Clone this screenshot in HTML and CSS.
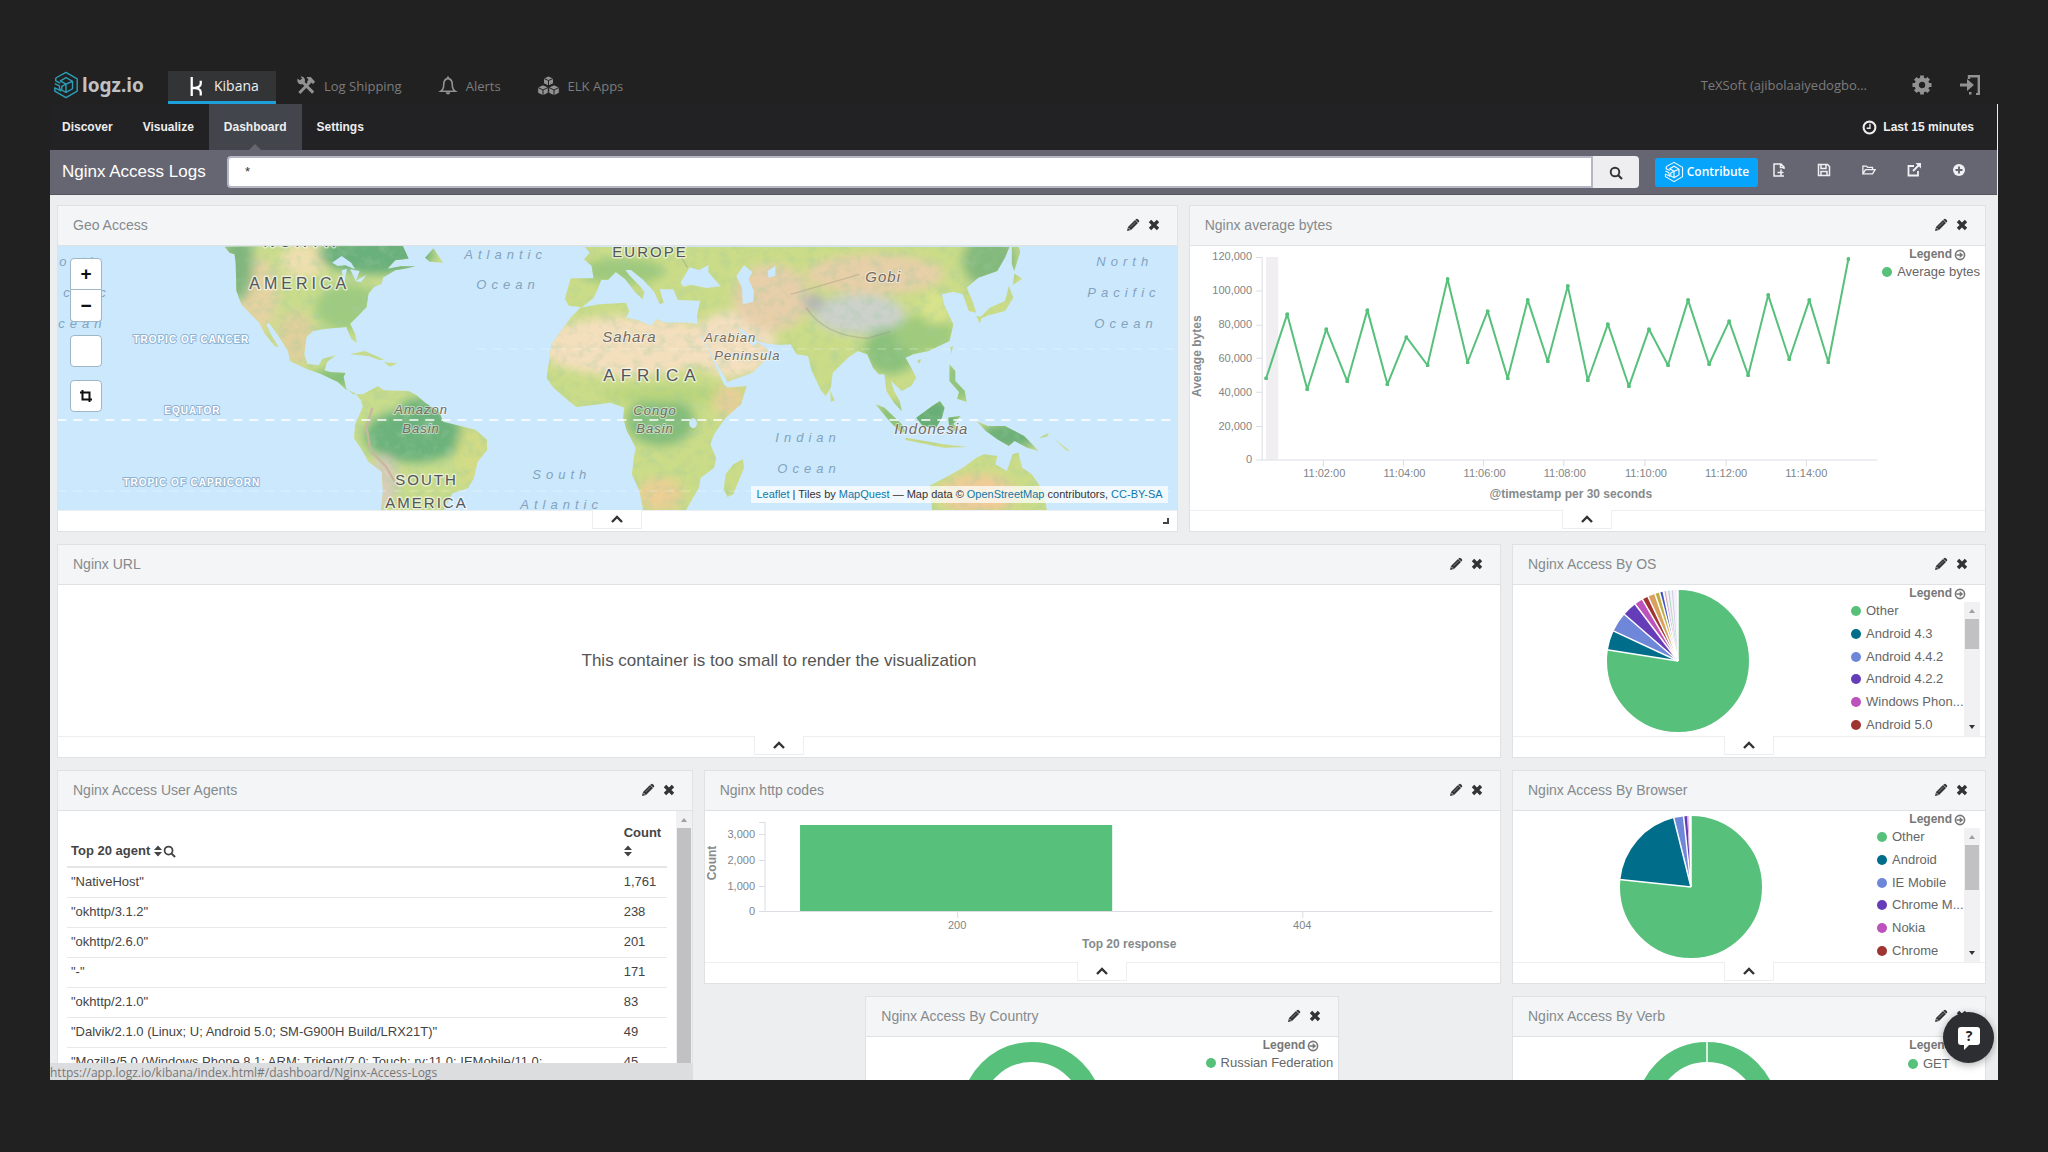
FILE: index.html
```html
<!DOCTYPE html>
<html lang="en">
<head>
<meta charset="utf-8">
<title>Nginx Access Logs - Kibana</title>
<link rel="stylesheet" href="styles.css">
</head>
<body>
<svg class="defs" aria-hidden="true">
  <symbol id="pencil" viewBox="0 0 14 14"><path d="M1 13l1-4 7-7 3 3-7 7z"/><path d="M10 1.200q1-.8 1.900 0l1 1q.8.9 0 1.800l-.6.6-3-2.900z"/><path d="M2.200 9.700l2 2" stroke="#fff" stroke-width=".8"/><path d="M4.500 9l5-5" stroke="#fff" stroke-width=".6" opacity=".6"/></symbol>
  <symbol id="times" viewBox="0 0 14 14"><path d="M3 3l8 8M11 3l-8 8" fill="none" stroke="currentColor" stroke-width="3.400"/></symbol>
  <symbol id="up" viewBox="0 0 14 14"><path d="M2 10l5-5 5 5" fill="none" stroke="currentColor" stroke-width="2.400"/></symbol>
  <symbol id="arrow" viewBox="0 0 12 12"><circle cx="6" cy="6" r="4.600" fill="none" stroke="currentColor" stroke-width="1.600"/><path d="M2.500 5.200h3.200V3L9.200 6 5.700 9V6.800H2.500z"/></symbol>
  <symbol id="search" viewBox="0 0 14 14"><circle cx="6" cy="6" r="4.300" fill="none" stroke="currentColor" stroke-width="1.900"/><path d="M9 9l4 4" stroke="currentColor" stroke-width="2.200"/></symbol>
  <symbol id="sort" viewBox="0 0 8 12"><path d="M0 5l4-4.500L8 5zM0 7h8l-4 4.500z"/></symbol>
  <symbol id="cube" viewBox="0 0 28 30"><g fill="none" stroke="currentColor" stroke-width="1.500" stroke-linejoin="round"><path d="M3 7.500L14 1.500l12 7v13l-12 7-12-7v-3.500l7 3.500"/><path d="M3 7.500v3l5 2.500M2 13.500l5 2.500v3l7 4 7-4v-8l-7-4-6 3.500 6 3.500 7-3M14 14v9"/><path d="M14 14l-4.500 2.500v3"/></g></symbol>
</svg>
<div class="screen">
  <header class="top">
    <a class="brand" href="#"><svg><use href="#cube"/></svg><span>logz.io</span></a>
    <nav class="products">
      <a class="on" href="#"><svg viewBox="0 0 14 20"><path d="M2.500 0v20M12 4v3q0 4.500-9 4.500 9 0 9 4.500v3.500" fill="none" stroke="#fff" stroke-width="2.400"/></svg>Kibana</a>
      <a href="#"><svg viewBox="0 0 20 20"><path d="M5 5l12.500 12.500" stroke="currentColor" stroke-width="3.200"/><path d="M1 2.500l2.500 2L6 2.500 4 .5q4.500-.5 5 4 0 2-1.500 3L5.500 9Q0 8.500 1 2.500z"/><path d="M14.500 6L3 18" stroke="currentColor" stroke-width="3"/><path d="M10.500 1l4.500 0 4.500 5-2 2.500-2.500-2-2 1.500-2-2 1.500-2z"/></svg>Log Shipping</a>
      <a href="#"><svg viewBox="0 0 20 20"><path d="M10 2.500Q5.500 3.500 5.500 9q0 5-3 7h15q-3-2-3-7 0-5.500-4.500-6.500z" fill="none" stroke="currentColor" stroke-width="1.700"/><path d="M9 .5h2V3H9zM7.500 17h5q-.5 2.500-2.500 2.500T7.500 17z"/></svg>Alerts</a>
      <a href="#"><svg class="cubes" viewBox="0 0 22 20"><g stroke="#212121" stroke-width="1"><path d="M11 0l5 2.200v5.300L11 10 6 7.500V2.200z"/><path d="M5.500 8.800l5.300 2.400v5.800l-5.300 2.700L.2 17v-5.800z"/><path d="M16.500 8.800l5.300 2.400v5.800l-5.300 2.700-5.300-2.700v-5.800z"/><path d="M6.500 2.500l4.500 2 4.500-2M11 4.500V10M.5 11.500l5 2.500 5-2.500M11.500 11.500l5 2.500 5-2.500M5.500 14v5.500M16.500 14v5.500" fill="none"/></g></svg>ELK Apps</a>
    </nav>
    <span class="account">TeXSoft (ajibolaaiyedogbo...</span>
    <button class="plain" aria-label="Account settings"><svg viewBox="0 0 20 20"><circle cx="10" cy="10" r="5.300" fill="none" stroke="currentColor" stroke-width="4.200"/><path d="M10 .5v3.500M10 16v3.500M.5 10H4M16 10h3.500M3.300 3.300l2.400 2.400M14.300 14.300l2.400 2.400M3.300 16.700l2.400-2.400M14.300 5.700l2.400-2.400" stroke="currentColor" stroke-width="3.800"/></svg></button>
    <button class="plain" aria-label="Sign out"><svg viewBox="0 0 20 20"><path d="M9 4V1.200h9.800v18H16" fill="none" stroke="currentColor" stroke-width="2.400"/><path d="M0 8.500h7V4l7 6-7 6v-4.500H0zM9 17h2.500v2.500H9z"/></svg></button>
  </header>
  <div class="app">
    <nav class="tabs">
      <a href="#">Discover</a><a href="#">Visualize</a><a class="on" href="#">Dashboard</a><a href="#">Settings</a>
      <button class="time"><svg viewBox="0 0 16 16"><circle cx="8" cy="8" r="6.300" fill="none" stroke="currentColor" stroke-width="2.200"/><path d="M8.500 4v4.800H5" fill="none" stroke="currentColor" stroke-width="1.400"/></svg>Last 15 minutes</button>
    </nav>
    <div class="bar">
      <h1>Nginx Access Logs</h1>
      <form class="query"><input type="text" value="*" aria-label="Search query"><button type="button" aria-label="Search"><svg><use href="#search"/></svg></button></form>
      <button class="contribute"><svg><use href="#cube"/></svg>Contribute</button>
      <div class="tools">
        <button class="plain" aria-label="New dashboard"><svg viewBox="0 0 14 14"><path d="M12 6V4L9 1H2v12h10M8.500 1v3.500H12M5.500 9.500h6M9 6.500v6" fill="none" stroke="currentColor" stroke-width="1.500"/></svg></button>
        <button class="plain" aria-label="Save dashboard"><svg viewBox="0 0 14 14"><path d="M1.500 1.500h9l2 2v9h-11zM4 1.500v4h5v-4M4 12.500V8.500h6v4" fill="none" stroke="currentColor" stroke-width="1.500"/></svg></button>
        <button class="plain" aria-label="Open dashboard"><svg viewBox="0 0 16 14"><path d="M1 11V2.500h4L6.500 4H12v2.500M1 11.500l3-5h11l-3 5z" fill="none" stroke="currentColor" stroke-width="1.500"/></svg></button>
        <button class="plain" aria-label="Share dashboard"><svg viewBox="0 0 14 14"><path d="M7 3H1.500v9.500H11V8M6 8l6-6" fill="none" stroke="currentColor" stroke-width="1.800"/><path d="M8.500 0H14v5.500z"/></svg></button>
        <button class="plain" aria-label="Add visualization"><svg viewBox="0 0 14 14"><circle cx="7" cy="7" r="6"/><path d="M7 3.500v7M3.500 7h7" stroke="#666672" stroke-width="1.900"/></svg></button>
      </div>
    </div>
    <main class="grid">
      <section class="panel geo">
        <header><h2>Geo Access</h2><button class="plain" aria-label="Edit"><svg><use href="#pencil"/></svg></button><button class="plain" aria-label="Remove"><svg><use href="#times"/></svg></button></header>
        <div class="body map">
          <svg class="world" viewBox="0 0 1120 264" preserveAspectRatio="xMidYMid slice">
            <defs>
              <filter id="soft" x="-30%" y="-30%" width="160%" height="160%"><feGaussianBlur stdDeviation="14"/></filter>
              <filter id="rough" x="0" y="0" width="100%" height="100%"><feTurbulence type="fractalNoise" baseFrequency=".035" numOctaves="3" seed="4"/><feColorMatrix values="0 0 0 0 .35  0 0 0 0 .6  0 0 0 0 .35  2.200 0 0 0 -1"/></filter>
              <clipPath id="west"><path d="M484 167l13 18 13 5 3 25 2 85 13 40 32 38 15 17 15 35 25 35 10 3-20-38-12-30 7-5 25 40 25 45 5 30 45 25 35 13 45 25 20 22 25 12 15 20 5 20-20 55-3 40 18 30 20 40 35 30 3 60-6 60h163l10-25 15-30 40-15 15-30 10-50 25-35v-30l-30-30-50-15-35-10-10-30-35-25-25-25-20-12-65-2-15-12-20 12-20 12-25 0-18-17-7-35 5-12-40-3-15-5 7-25 23-20-35 10-10 20-30-5-8-30 6-50 17-18 35-7 30-3 22-2 13 35 15 13-5-28-13-30 18-20 25-30 5-40 15-20 20-10 3-18 32-22 25-5 28-7-38 0-35 7 20-25 35-5-10-25-5-13zM1008 200l22-28 25 43-35-3zM812 490l38-10 50 25-10 3-30-13zM900 514l36 3-20 10z"/></clipPath>
              <clipPath id="east"><path d="M-75 380l25-30 50-10 70-5 8 25-8 20 30 8 35 17 15-20 20 10 60 0 28 5 10 40 22 50 20 50 15 40 10 10 50-5-15 55-40 40-30 50-10 30 15 40-5 30-35 30-5 30-20 40-15 30H115l-10-60-20-50 5-50 5-30-23-50-10-40 3-30-35-15-30 5-60 8-30-28-30-30-18-30 8-60 5-40 25-40zM375 805l3 25-28 80-15 8-10-23 5-45 20-30zM-75 262l60 0-5-37-20-20 15-20-13-18H1072l-12 33-20 40-50 20-30 30 15 40 10 35-20-5-15-50-25-8-30 8 5 30 25 60-10 50-55 30-40 10-20 10 15 30 13 30-13 25-25 15-28-30 8 30 15 30 5 30-20-25-20-35-5-50h-15l-15-20-15-40-25-10-25 20-40 45-5 45-13 25-12-15-25-60-10-45-30-5-15-30-30 2-40-7-30-10-25-30-13-5 18 30 20 25 15-10 25 20-5 30-35 40-65 27-30-60-32-70-15-25-3-40 8-48-58-2-12-32-35 0 10 40-10 5-15-38-30-37-30-28-15 0 10 16 30 35 10 15-5 22-20-22-25-38-25-22-20 23-18 0-10 30-10 25-30 28-35-5-10-20zM1078 167h18l4 15-16 58-6-20zM1085 248l20 15-25 20zM1070 285l12 35-22 40-40 12-30 13 30-35 40-20zM985 375l15 3-6 20zM917 470l7-5-4 23zM830 510l10-6-3 14zM915 520l15 20v30l25 30 5 33-25-10 5-20-25-33zM722 640l23 10 45 50 10 22-12 3-30-35zM800 740l100 20 62 8-62 2-100-23zM828 680l42-35 20-15 12 20-7 30-15 30-35-5zM912 680l33-6-20 25 16 18-26 5zM985 690l30 15 45 0 50 30 38 45-30-10-33-20-15 15-30-20-30-25zM1150 740l25-15-5 12zM1190 745l40 35-10-2zM603 598l12 30-10 5zM870 960l-8-75 58-35 30-20 35-30 20-10 35 5-5 25 30 20 15-50 15-5 10 45 25 20 30 50 10 60z"/></clipPath>
            </defs>
            <g transform="translate(-18 -55) scale(.3827 .3333)" clip-path="url(#west)">
              <path fill="#c9dc8c" d="M480 160h730v810H480z"/>
              <g filter="url(#soft)">
                <ellipse cx="570" cy="310" rx="55" ry="110" fill="#e5d3a2"/><ellipse cx="670" cy="440" rx="50" ry="80" fill="#dfd09c"/><ellipse cx="690" cy="210" rx="60" ry="50" fill="#eedfae"/>
                <ellipse cx="810" cy="350" rx="90" ry="70" fill="#9fcb80"/><ellipse cx="880" cy="190" rx="150" ry="60" fill="#6bb07c"/><ellipse cx="520" cy="220" rx="40" ry="110" fill="#80b67d"/><ellipse cx="800" cy="560" rx="90" ry="30" fill="#84c078"/>
                <ellipse cx="980" cy="735" rx="130" ry="80" fill="#6cb27b"/><ellipse cx="1000" cy="660" rx="60" ry="40" fill="#6cb27b"/><ellipse cx="1140" cy="790" rx="50" ry="100" fill="#d3dc85"/><ellipse cx="900" cy="870" rx="35" ry="80" fill="#d8cdba"/>
              </g>
              <path d="M870 650l-15 60 10 70 40 45 30 60" fill="none" stroke="#c9b5a0" stroke-width="6"/>
              <path filter="url(#rough)" opacity=".45" d="M480 160h730v810H480z"/>
              <g fill="#cce8fd"><path d="M765 215l25-20 25 20 10 20-25-12-20 2zM790 238l14-5-8 45zM812 235l25 5-10 30zM825 270l30-18-15 22z"/></g>
            </g>
            <g transform="translate(542 -55) scale(.3827 .3333)" clip-path="url(#east)">
              <path fill="#cbdc88" d="M-150 160h1400v810H-150z"/>
              <g filter="url(#soft)">
                <ellipse cx="80" cy="465" rx="240" ry="90" fill="#f4dfbd"/><ellipse cx="350" cy="460" rx="110" ry="100" fill="#f4dfc0"/><ellipse cx="450" cy="320" rx="100" ry="100" fill="#e7cfaa"/><ellipse cx="720" cy="250" rx="180" ry="60" fill="#e7cfa8"/>
                <ellipse cx="60" cy="240" rx="110" ry="40" fill="#9fc97c"/><ellipse cx="160" cy="690" rx="90" ry="75" fill="#84bd7b"/><ellipse cx="200" cy="610" rx="200" ry="25" fill="#b9d57d"/><ellipse cx="340" cy="630" rx="40" ry="50" fill="#e9cf98"/><ellipse cx="160" cy="910" rx="60" ry="50" fill="#ebcf94"/>
                <ellipse cx="680" cy="370" rx="120" ry="60" fill="#ccd1cb"/><ellipse cx="560" cy="335" rx="28" ry="28" fill="#b4b5b4"/><ellipse cx="760" cy="480" rx="70" ry="70" fill="#8bc17c"/><ellipse cx="850" cy="430" rx="80" ry="60" fill="#a0cb7b"/><ellipse cx="1020" cy="210" rx="70" ry="80" fill="#84b97d"/><ellipse cx="880" cy="350" rx="40" ry="50" fill="#d8e38c"/>
                <ellipse cx="870" cy="680" rx="70" ry="60" fill="#68ae76"/><ellipse cx="1070" cy="735" rx="80" ry="40" fill="#6db079"/><ellipse cx="990" cy="910" rx="100" ry="60" fill="#f0cb97"/><ellipse cx="940" cy="570" rx="40" ry="60" fill="#8ec37a"/><ellipse cx="760" cy="690" rx="40" ry="60" fill="#8ec37a"/>
              </g>
              <path d="M540 350q50 85 160 92l60-20M200 170l30 60M500 310l180-60" fill="none" stroke="#918f77" stroke-width="4" opacity=".35"/>
              <path filter="url(#rough)" opacity=".4" d="M-150 160h1400v810H-150z"/>
              <g fill="#cce8fd"><path d="M212 275l24-46 25 8 24-15 0 22 32 42-37 5-40-10-20 6zM358 255l20-32 22 20-10 22 14 35-2 32-27 8-2-50zM440 240l20-16v30l-18 6zM1060 200l10 0-40 60z"/><ellipse cx="245" cy="697" rx="10" ry="15"/></g>
            </g>
            <g stroke="#fff" stroke-dasharray="9 7" fill="none"><path d="M0 174h1120" stroke-width="2" opacity=".75"/><path d="M420 103h700M0 245h1120" opacity=".35"/></g>
            <g class="m-land"><text x="206" y="1" class="sp3">NORTH</text><text x="192" y="43" class="sp3">AMERICA</text><text x="338" y="239" class="sp2">SOUTH</text><text x="328" y="262" class="sp2">AMERICA</text><text x="555" y="11" class="sp2">EUROPE</text><text x="546" y="135" class="sp4">AFRICA</text></g>
            <g class="m-region"><text x="545" y="96" class="big">Sahara</text><text x="647" y="96">Arabian</text><text x="657" y="114">Peninsula</text><text x="808" y="36" class="big">Gobi</text><text x="837" y="188" class="big">Indonesia</text><text x="337" y="168">Amazon</text><text x="345" y="187">Basin</text><text x="576" y="169">Congo</text><text x="579" y="187">Basin</text></g>
            <g class="m-sea"><text x="407" y="13">Atlantic</text><text x="419" y="43">Ocean</text><text x="475" y="233">South</text><text x="463" y="263">Atlantic</text><text x="718" y="196">Indian</text><text x="720" y="227">Ocean</text><text x="1039" y="20">North</text><text x="1030" y="51">Pacific</text><text x="1037" y="82">Ocean</text><text x="2" y="20">orth</text><text x="6" y="51">cific</text><text x="1" y="82">cean</text></g>
            <g class="m-line"><text x="76" y="97">TROPIC OF CANCER</text><text x="107" y="168">EQUATOR</text><text x="66" y="240">TROPIC OF CAPRICORN</text></g>
          </svg>
          <div class="controls">
            <div class="zoomers"><button aria-label="Zoom in">+</button><button aria-label="Zoom out">−</button></div>
            <button aria-label="Draw filter"></button>
            <button aria-label="Fit bounds"><svg viewBox="0 0 12 12"><path d="M2.500 0v9.500H12M0 2.500h9.500V12" fill="none" stroke="#111" stroke-width="2"/></svg></button>
          </div>
          <p class="credit"><a href="#">Leaflet</a> | Tiles by <a href="#">MapQuest</a> — Map data © <a href="#">OpenStreetMap</a> contributors, <a href="#">CC-BY-SA</a></p>
        </div>
        <footer><button aria-label="Toggle details"><svg><use href="#up"/></svg></button><i class="grip"></i></footer>
      </section>

      <section class="panel avg">
        <header><h2>Nginx average bytes</h2><button class="plain" aria-label="Edit"><svg><use href="#pencil"/></svg></button><button class="plain" aria-label="Remove"><svg><use href="#times"/></svg></button></header>
        <div class="body">
          <svg class="chart" viewBox="0 0 690 264" preserveAspectRatio="xMinYMin slice">
            <defs><marker id="dot" viewBox="-2 -2 4 4" markerWidth="4" markerHeight="4" markerUnits="userSpaceOnUse"><circle r="2" fill="#57c17b"/></marker></defs>
            <path d="M76 11h12v202H76z" fill="#f0eef1"/>
            <path class="axis" d="M66 11.500h6v202h-6M66 45h6M66 79h6M66 112h6M66 146h6M66 180h6M72 213.500h614M133 214v6M213 214v6M293 214v6M373 214v6M454 214v6M535 214v6M615 214v6"/>
            <g class="tick end"><text x="62" y="14">120,000</text><text x="62" y="48">100,000</text><text x="62" y="82">80,000</text><text x="62" y="116">60,000</text><text x="62" y="150">40,000</text><text x="62" y="184">20,000</text><text x="62" y="217">0</text></g>
            <g class="tick mid"><text x="134" y="231">11:02:00</text><text x="214" y="231">11:04:00</text><text x="294" y="231">11:06:00</text><text x="374" y="231">11:08:00</text><text x="455" y="231">11:10:00</text><text x="535" y="231">11:12:00</text><text x="615" y="231">11:14:00</text></g>
            <g class="label mid"><text x="380" y="251">@timestamp per 30 seconds</text><text transform="translate(11 110) rotate(-90)">Average bytes</text></g>
            <polyline class="series" points="76,132 97,68 117,143 136,83 157,135 177,64 197,138 216,91 237,119 257,33 277,116 297,65 317,132 337,54 357,115 377,40 397,134 417,78 438,140 458,83 477,119 497,54 518,118 538,75 557,129 577,49 598,113 618,54 637,116 657,13"/>
          </svg>
          <div class="legend"><h3>Legend<svg><use href="#arrow"/></svg></h3><ul><li class="c1">Average bytes</li></ul></div>
        </div>
        <footer><button aria-label="Toggle details"><svg><use href="#up"/></svg></button></footer>
      </section>

      <section class="panel url">
        <header><h2>Nginx URL</h2><button class="plain" aria-label="Edit"><svg><use href="#pencil"/></svg></button><button class="plain" aria-label="Remove"><svg><use href="#times"/></svg></button></header>
        <div class="body"><p class="notice">This container is too small to render the visualization</p></div>
        <footer><button aria-label="Toggle details"><svg><use href="#up"/></svg></button></footer>
      </section>

      <section class="panel os">
        <header><h2>Nginx Access By OS</h2><button class="plain" aria-label="Edit"><svg><use href="#pencil"/></svg></button><button class="plain" aria-label="Remove"><svg><use href="#times"/></svg></button></header>
        <div class="body">
          <div class="round"><svg viewBox="-72 -72 144 144">
            <circle r="71" fill="#f4f1f8"/>
            <g class="slices" transform="rotate(-90)">
              <circle r="35.500" pathLength="360" stroke="#57c17b" stroke-dasharray="279 360"/>
              <circle r="35.500" pathLength="360" stroke="#006e8a" stroke-dasharray="16 360" transform="rotate(279)"/>
              <circle r="35.500" pathLength="360" stroke="#6f87d8" stroke-dasharray="16 360" transform="rotate(295)"/>
              <circle r="35.500" pathLength="360" stroke="#663db8" stroke-dasharray="12 360" transform="rotate(311)"/>
              <circle r="35.500" pathLength="360" stroke="#bc52bc" stroke-dasharray="7 360" transform="rotate(323)"/>
              <circle r="35.500" pathLength="360" stroke="#9e3533" stroke-dasharray="5 360" transform="rotate(330)"/>
              <circle r="35.500" pathLength="360" stroke="#daa05d" stroke-dasharray="6 360" transform="rotate(335)"/>
              <circle r="35.500" pathLength="360" stroke="#bfaf40" stroke-dasharray="4 360" transform="rotate(341)"/>
              <circle r="35.500" pathLength="360" stroke="#4050bf" stroke-dasharray="3 360" transform="rotate(345)"/>
              <circle r="35.500" pathLength="360" stroke="#d9a0c8" stroke-dasharray="1 360" transform="rotate(349)"/>
              <circle r="35.500" pathLength="360" stroke="#a8d8b8" stroke-dasharray="1 360" transform="rotate(352)"/>
              <circle r="35.500" pathLength="360" stroke="#d5cde8" stroke-dasharray="1 360" transform="rotate(355)"/>
            </g>
            <path class="cut" d="M0 0V-72"/><path class="cut" d="M0 0V-72" transform="rotate(279)"/><path class="cut" d="M0 0V-72" transform="rotate(295)"/><path class="cut" d="M0 0V-72" transform="rotate(311)"/><path class="cut" d="M0 0V-72" transform="rotate(323)"/><path class="cut" d="M0 0V-72" transform="rotate(330)"/><path class="cut" d="M0 0V-72" transform="rotate(335)"/><path class="cut" d="M0 0V-72" transform="rotate(341)"/><path class="cut" d="M0 0V-72" transform="rotate(345)"/><path class="cut" d="M0 0V-72" transform="rotate(348)"/>
          </svg></div>
          <div class="legend wide"><h3>Legend<svg><use href="#arrow"/></svg></h3>
            <div class="scroller"><ul><li class="c1">Other</li><li class="c2">Android 4.3</li><li class="c3">Android 4.4.2</li><li class="c4">Android 4.2.2</li><li class="c5">Windows Phon...</li><li class="c6">Android 5.0</li></ul><div class="track"><i class="thumb"></i></div></div></div>
        </div>
        <footer><button aria-label="Toggle details"><svg><use href="#up"/></svg></button></footer>
      </section>

      <section class="panel agents">
        <header><h2>Nginx Access User Agents</h2><button class="plain" aria-label="Edit"><svg><use href="#pencil"/></svg></button><button class="plain" aria-label="Remove"><svg><use href="#times"/></svg></button></header>
        <div class="body">
          <div class="sheet"><table>
            <thead><tr><th>Top 20 agent <svg class="sort"><use href="#sort"/></svg> <svg class="find"><use href="#search"/></svg></th><th class="num">Count<br><svg class="sort"><use href="#sort"/></svg></th></tr></thead>
            <tbody>
              <tr><td>"NativeHost"</td><td>1,761</td></tr>
              <tr><td>"okhttp/3.1.2"</td><td>238</td></tr>
              <tr><td>"okhttp/2.6.0"</td><td>201</td></tr>
              <tr><td>"-"</td><td>171</td></tr>
              <tr><td>"okhttp/2.1.0"</td><td>83</td></tr>
              <tr><td>"Dalvik/2.1.0 (Linux; U; Android 5.0; SM-G900H Build/LRX21T)"</td><td>49</td></tr>
              <tr><td>"Mozilla/5.0 (Windows Phone 8.1; ARM; Trident/7.0; Touch; rv:11.0; IEMobile/11.0;</td><td>45</td></tr>
            </tbody>
          </table></div>
          <div class="track tall"><i class="thumb"></i></div>
        </div>
      </section>

      <section class="panel codes">
        <header><h2>Nginx http codes</h2><button class="plain" aria-label="Edit"><svg><use href="#pencil"/></svg></button><button class="plain" aria-label="Remove"><svg><use href="#times"/></svg></button></header>
        <div class="body">
          <svg class="chart" viewBox="0 0 795 151" preserveAspectRatio="xMinYMin slice">
            <path class="axis" d="M54 11.500h6v89h-6M54 23.500h6M54 49.500h6M54 75.500h6M60 100.500h727M252.500 101v6M597.500 101v6"/>
            <path d="M95 14h312v86H95z" fill="#57c17b"/>
            <g class="tick end"><text x="50" y="27">3,000</text><text x="50" y="53">2,000</text><text x="50" y="79">1,000</text><text x="50" y="104">0</text></g>
            <g class="tick mid"><text x="252" y="118">200</text><text x="597" y="118">404</text></g>
            <g class="label mid"><text x="424" y="137">Top 20 response</text><text transform="translate(11 52) rotate(-90)">Count</text></g>
          </svg>
        </div>
        <footer><button aria-label="Toggle details"><svg><use href="#up"/></svg></button></footer>
      </section>

      <section class="panel browser">
        <header><h2>Nginx Access By Browser</h2><button class="plain" aria-label="Edit"><svg><use href="#pencil"/></svg></button><button class="plain" aria-label="Remove"><svg><use href="#times"/></svg></button></header>
        <div class="body">
          <div class="round"><svg viewBox="-72 -72 144 144">
            <circle r="71" fill="#faf8fc"/>
            <g class="slices" transform="rotate(-90)">
              <circle r="35.500" pathLength="360" stroke="#57c17b" stroke-dasharray="276 360"/>
              <circle r="35.500" pathLength="360" stroke="#006e8a" stroke-dasharray="70 360" transform="rotate(276)"/>
              <circle r="35.500" pathLength="360" stroke="#6f87d8" stroke-dasharray="8 360" transform="rotate(346)"/>
              <circle r="35.500" pathLength="360" stroke="#663db8" stroke-dasharray="3 360" transform="rotate(354)"/>
              <circle r="35.500" pathLength="360" stroke="#dcaed8" stroke-dasharray="1 360" transform="rotate(357)"/>
            </g>
            <path class="cut" d="M0 0V-72"/><path class="cut" d="M0 0V-72" transform="rotate(276)"/><path class="cut" d="M0 0V-72" transform="rotate(346)"/><path class="cut" d="M0 0V-72" transform="rotate(354)"/>
          </svg></div>
          <div class="legend narrow"><h3>Legend<svg><use href="#arrow"/></svg></h3>
            <div class="scroller"><ul><li class="c1">Other</li><li class="c2">Android</li><li class="c3">IE Mobile</li><li class="c4">Chrome M...</li><li class="c5">Nokia</li><li class="c6">Chrome</li></ul><div class="track"><i class="thumb big"></i></div></div></div>
        </div>
        <footer><button aria-label="Toggle details"><svg><use href="#up"/></svg></button></footer>
      </section>

      <section class="panel country">
        <header><h2>Nginx Access By Country</h2><button class="plain" aria-label="Edit"><svg><use href="#pencil"/></svg></button><button class="plain" aria-label="Remove"><svg><use href="#times"/></svg></button></header>
        <div class="body">
          <div class="round"><svg viewBox="-72 -72 144 144"><circle r="61" fill="none" stroke="#57c17b" stroke-width="20"/></svg></div>
          <div class="legend"><h3>Legend<svg><use href="#arrow"/></svg></h3><ul><li class="c1">Russian Federation</li></ul></div>
        </div>
      </section>

      <section class="panel verb">
        <header><h2>Nginx Access By Verb</h2><button class="plain" aria-label="Edit"><svg><use href="#pencil"/></svg></button><button class="plain" aria-label="Remove"><svg><use href="#times"/></svg></button></header>
        <div class="body">
          <div class="round"><svg viewBox="-72 -72 144 144"><circle r="61" fill="none" stroke="#57c17b" stroke-width="20"/><path class="cut" d="M0-50V-72"/></svg></div>
          <div class="legend slim"><h3>Legend<svg><use href="#arrow"/></svg></h3><ul><li class="c1">GET</li><li class="c2">POST</li></ul></div>
        </div>
      </section>
    </main>
    <div class="status">https://app.logz.io/kibana/index.html#/dashboard/Nginx-Access-Logs</div>
    <button class="help" aria-label="Help"><svg viewBox="0 0 24 24"><path d="M4 1h16q3 0 3 3v12q0 3-3 3h-8l-5 5v-5H4q-3 0-3-3V4q0-3 3-3z" fill="#fff"/><text x="12" y="15">?</text></svg></button>
  </div>
</div>
</body>
</html>
```
FILE: styles.css
```css
* { box-sizing: border-box; }
body { margin: 0; background: #212121; color: #444; font: 13px/18px "Liberation Sans", Arial, sans-serif; }
h1, h2, h3, p, ul { margin: 0; padding: 0; font-weight: normal; }
ul { list-style: none; }
a { text-decoration: none; color: inherit; }
svg { fill: currentColor; flex: none; }
button { font: inherit; padding: 0; border: 0; cursor: pointer; }
.plain { background: none; color: inherit; display: flex; align-items: center; justify-content: center; }
.defs { position: absolute; width: 0; height: 0; }

.screen { height: 100vh; padding: 71px 50px 72px; display: flex; flex-direction: column; }

/* product bar */
.top { display: flex; height: 33px; align-items: center; color: #7c7c7c; font: 13px/20px "Open Sans", sans-serif; padding: 0 18px 0 2px; }
.top > * { padding-bottom: 5px; }
.brand { display: flex; align-items: center; gap: 2px; width: 116px; color: #c0c2c4; font: bold 19px/24px "Noto Sans", sans-serif; }
.brand svg { width: 28px; height: 28px; color: #2b9fb9; }
.products { display: flex; align-self: stretch; flex: 1; padding-bottom: 0; }
.products a { display: flex; align-items: center; gap: 8px; padding: 0 18px 4px; }
.products svg { width: 20px; height: 19px; color: #929292; }
.products .cubes { width: 23px; height: 20px; }
.products .on { width: 108px; margin-right: 2px; background: #333436; border-bottom: 3px solid #1d9fdb; color: #eee; font-size: 14px; padding-bottom: 0; }
.account { margin-right: 45px; }
.top .plain { width: 20px; margin-left: 28px; }
.account + .plain { margin-left: 0; }
.top .plain svg { width: 20px; height: 20px; color: #929292; }

.app { position: relative; flex: 1; min-height: 0; display: flex; flex-direction: column; overflow: hidden; border-right: 1px solid #eee; background: #eceef0; }
.tabs { display: flex; height: 46px; flex: none; background: #222224; color: #eee; font-weight: bold; font-size: 12px; }
.tabs a { padding: 14px 15px; }
.tabs a:first-child { padding-left: 12px; }
.tabs .on { background: #42454b; position: relative; }
.tabs .on::after { content: ""; position: absolute; left: 50%; bottom: 0; margin-left: -6px; border: 6px solid transparent; border-top: 0; border-bottom-color: #666672; }
.time { margin-left: auto; padding-right: 23px; background: none; color: #eee; display: flex; align-items: center; gap: 6px; }
.time svg { width: 15px; height: 15px; }

/* query bar */
.bar { display: flex; align-items: center; height: 45px; flex: none; padding: 0 31px 0 12px; background: #666672; color: #fff; border-bottom: 1px solid #565662; }
.bar h1 { font-size: 17px; line-height: 24px; width: 165px; }
.query { display: flex; flex: 1; height: 32px; }
.query input { flex: 1; min-width: 0; border: 2px solid #b5b7c4; border-radius: 4px 0 0 4px; padding: 0 16px; font: 13px/18px "Liberation Sans", Arial, sans-serif; color: #333; background: #fff; }
.query button { width: 46px; background: #eeeef0; color: #333; border-radius: 0 4px 4px 0; }
.query svg { width: 14px; height: 14px; vertical-align: middle; }
.contribute { display: flex; align-items: center; justify-content: center; gap: 3px; width: 103px; height: 29px; margin: 0 14px 0 16px; background: #06a4fa; color: #fff; border-radius: 3px; font: 600 12px/18px "Open Sans", sans-serif; }
.contribute svg { width: 20px; height: 22px; }
.tools { display: flex; gap: 31px; color: #f0f0f4; padding-bottom: 4px; }
.tools svg { width: 14px; height: 14px; }

/* dashboard */
.grid { flex: 1; min-height: 0; display: grid; grid-template-columns: repeat(12, minmax(0, 1fr)); grid-auto-rows: 101px; gap: 12px 11px; padding: 10px 11px 0 7px; overflow: hidden; }
.panel { display: flex; flex-direction: column; min-width: 0; background: #fff; border: 1px solid #dfe1e3; }
.panel > header { display: flex; align-items: center; gap: 7px; height: 40px; flex: none; padding: 0 16px 2px 15px; background: #f4f5f7; border-bottom: 1px solid #dfe1e3; color: #333; }
.panel h2 { flex: 1; font-size: 14px; line-height: 18px; color: #858a8c; }
.panel header svg { width: 14px; height: 14px; }
.geo { grid-area: 1 / 1 / span 3 / span 7; }
.avg { grid-area: 1 / 8 / span 3 / span 5; }
.url { grid-area: 4 / 1 / span 2 / span 9; }
.os { grid-area: 4 / 10 / span 2 / span 3; }
.agents { grid-area: 6 / 1 / span 6 / span 4; }
.codes { grid-area: 6 / 5 / span 2 / span 5; }
.browser { grid-area: 6 / 10 / span 2 / span 3; }
.country { grid-area: 8 / 6 / span 2 / span 3; }
.verb { grid-area: 8 / 10 / span 2 / span 3; }
.body { flex: 1; min-height: 0; display: flex; position: relative; }
.panel > footer { height: 21px; flex: none; display: flex; justify-content: center; position: relative; border-top: 1px solid #edeef0; }
.panel > footer button { width: 50px; height: 19px; margin-top: -1px; background: #fff; border: 1px solid #edeef0; border-top: 0; color: #333; display: flex; align-items: center; justify-content: center; }
.panel > footer svg { width: 14px; height: 14px; }
.grip { position: absolute; right: 8px; bottom: 7px; width: 6px; height: 6px; border: solid #444; border-width: 0 2px 2px 0; }
.notice { margin: auto; font-size: 17px; line-height: 24px; color: #555; }

/* charts */
.chart { flex: 1; min-width: 0; height: 100%; }
.axis { fill: none; stroke: #dcdde3; }
.series { fill: none; stroke: #57c17b; stroke-width: 2; stroke-linejoin: round; marker: url(#dot); }
.tick { font-size: 11px; fill: #808688; }
.label { font-size: 12px; font-weight: bold; fill: #858a8c; }
.mid { text-anchor: middle; }
.end { text-anchor: end; }
.round { flex: 1; display: flex; justify-content: center; padding: 4px 7px 0 0; }
.round svg { width: 144px; height: 144px; }
.slices circle { fill: none; stroke-width: 71; }
.cut { stroke: #fff; stroke-width: 1.5; }

.legend { margin-right: 5px; display: flex; flex-direction: column; color: #666; }
.legend.wide { width: 130px; }
.legend.narrow { width: 104px; }
.legend.slim { width: 73px; }
.legend h3 { display: flex; justify-content: flex-end; align-items: center; gap: 2px; padding-right: 14px; font-size: 12px; line-height: 17px; font-weight: bold; color: #777; }
.legend h3 svg { width: 12px; height: 12px; }
.legend li { display: block; position: relative; padding-left: 16px; line-height: 18px; white-space: nowrap; }
.legend li::before { content: ""; position: absolute; left: 1px; top: 50%; margin-top: -5px; width: 10px; height: 10px; border-radius: 50%; background: var(--c); }
.c1 { --c: #57c17b; } .c2 { --c: #006e8a; } .c3 { --c: #6f87d8; } .c4 { --c: #663db8; } .c5 { --c: #bc52bc; } .c6 { --c: #9e3533; }
.legend.slim li { line-height: 23px; margin-top: -2px; }
.scroller { flex: 1; min-height: 0; display: flex; }
.scroller ul { flex: 1; min-width: 0; display: flex; flex-direction: column; justify-content: space-between; padding-bottom: 2px; }
.track { position: relative; width: 16px; flex: none; background: #f1f1f3; }
.track::before, .track::after { content: ""; position: absolute; left: 5px; border: 3px solid transparent; }
.track::before { top: 7px; border-top: 0; border-bottom: 4px solid #a0a0a0; }
.track::after { bottom: 7px; border-bottom: 0; border-top: 4px solid #333; }
.thumb { position: absolute; left: 1px; right: 1px; top: 17px; height: 30px; background: #c1c1c3; }
.thumb.big { height: 45px; }
.tall .thumb { height: auto; bottom: 0; }

/* agents table */
.sheet { flex: 1; min-width: 0; padding: 8px 9px 0; overflow: hidden; }
table { width: 100%; border-collapse: collapse; table-layout: fixed; }
th, td { text-align: left; vertical-align: bottom; padding: 5px 4px 6px; border-bottom: 1px solid #e6e8ea; white-space: nowrap; }
th { color: #444; padding-bottom: 6px; border-bottom: 2px solid #e3e5e7; }
.num { width: 47px; }
.sort { width: 8px; height: 12px; vertical-align: -2px; }
.find { width: 13px; height: 13px; vertical-align: -3px; margin-left: -2px; }

/* map */
.map { background: #cce8fd; overflow: hidden; }
.world { width: 100%; height: 100%; }
.world text { paint-order: stroke; stroke-linejoin: round; }
.m-land { font-size: 16px; fill: #54565a; stroke: #ffffff90; stroke-width: 3px; }
.m-region { font-size: 13px; font-style: italic; fill: #746b62; stroke: #ffffff80; stroke-width: 2px; letter-spacing: 1px; }
.m-region .big { font-size: 15px; }
.m-sea { font-size: 13px; font-style: italic; fill: #82a3bd; letter-spacing: 5px; }
.m-line { font-size: 10px; font-weight: bold; fill: #fff; stroke: #8fb2d4; stroke-width: 2px; letter-spacing: 1px; }
.sp2 { font-size: 15px; letter-spacing: 2px; }
.sp3 { letter-spacing: 4px; }
.sp4 { font-size: 17px; letter-spacing: 6px; }
.controls { position: absolute; left: 12px; top: 12px; display: flex; flex-direction: column; gap: 13px; }
.controls button { width: 32px; height: 32px; background: #fff; border-radius: 4px; border: 1px solid #9fb6c4; display: flex; align-items: center; justify-content: center; font: bold 19px/24px "Liberation Sans", Arial, sans-serif; color: #111; }
.zoomers button:first-child { border-radius: 4px 4px 0 0; }
.zoomers button:last-child { border-top: 0; border-radius: 0 0 4px 4px; }
.controls svg { width: 12px; height: 12px; }
.credit { position: absolute; right: 9px; bottom: 7px; padding: 0 5px; font-size: 11px; line-height: 17px; background: #ffffffb8; color: #333; }
.credit a { color: #0f78a8; }

.status { position: absolute; left: 0; bottom: 0; width: 33%; height: 17px; overflow: hidden; background: #dcdddf; color: #777; font: 12px/20px "Open Sans", sans-serif; border-radius: 0 3px 0 0; }
.help { position: absolute; right: 3px; bottom: 17px; width: 51px; height: 51px; border-radius: 50%; background: #2d2e31; display: flex; align-items: center; justify-content: center; box-shadow: 0 2px 8px #0005; }
.help svg { width: 24px; height: 24px; }
.help text { font: bold 14px "Open Sans", sans-serif; text-anchor: middle; fill: #222; }
```
